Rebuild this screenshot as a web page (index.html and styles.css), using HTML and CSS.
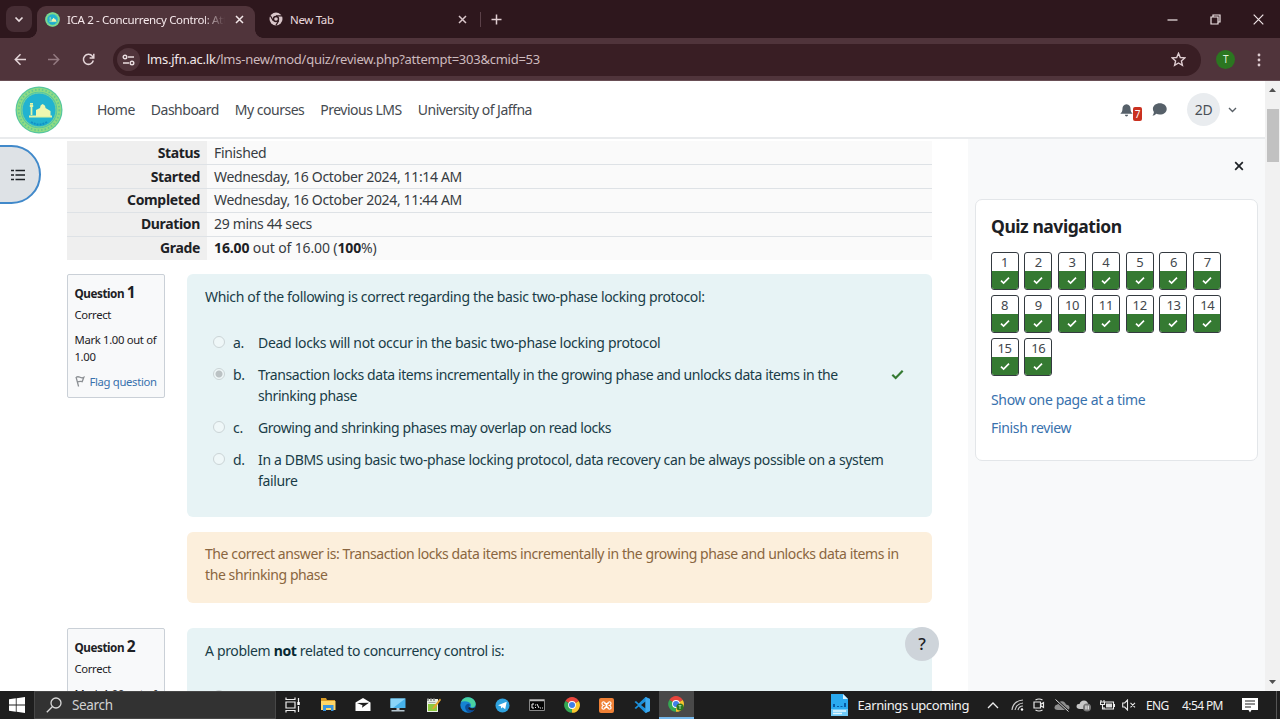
FILE: index.html
```html
<!DOCTYPE html>
<html lang="en">
<head>
<meta charset="utf-8">
<title>ICA 2 - Concurrency Control: Attempt review</title>
<link rel="stylesheet" href="styles.css">
</head>
<body>
<svg class="defs" aria-hidden="true">
  <symbol id="check" viewBox="0 0 12 10"><path d="M1.2 5.2 4.3 8.2 10.8 1.6" fill="none" stroke="currentColor" stroke-width="2"/></symbol>
  <symbol id="seal" viewBox="0 0 48 48">
    <circle cx="24" cy="24" r="23.5" fill="#55c6a0"/>
    <circle cx="24" cy="24" r="20.3" fill="none" stroke="#8fdc84" stroke-width="4"/>
    <circle cx="24" cy="24" r="17" fill="#22b3d0" stroke="#7bd49b" stroke-width="1"/>
    <circle cx="24" cy="24" r="20.3" fill="none" stroke="#62c795" stroke-width="1.8" stroke-dasharray="1.5 2"/>
    <path d="M14 30.500h23M16.500 29V20M14.800 20h3.400M15 17.800h3" stroke="#e4f5a5" stroke-width="1.800"/>
    <path d="M21 30v-6l4-2q0-3 2.500-4 3 1 3 4l5 3v5z" fill="#eff7b0"/>
    <path d="M16 36q8 5 16 0" fill="none" stroke="#128fc5" stroke-width="2" stroke-dasharray="2 1"/>
  </symbol>
  <symbol id="chrome" viewBox="0 0 16 16">
    <path d="M8 8 1.300 4A7.800 7.800 0 0 1 14.800 4z" fill="#e8453c"/>
    <path d="M8 8 14.800 4A7.800 7.800 0 0 1 8 15.800z" fill="#fbc72d"/>
    <path d="M8 8v7.800A7.800 7.800 0 0 1 1.300 4z" fill="#35a853"/>
    <circle cx="8" cy="8" r="3.900" fill="#fff"/><circle cx="8" cy="8" r="3" fill="#3f7fe8"/>
  </symbol>
</svg>

<header class="tabstrip">
  <div class="tab-search"><svg width="10" height="7" viewBox="0 0 10 7"><path d="m1.500 1.500 3.500 3.500 3.500-3.500" fill="none" stroke="#e9dcdf" stroke-width="1.700"/></svg></div>
  <div class="tab tab-active">
    <svg width="15" height="15"><use href="#seal"/></svg>
    <span class="tab-title tab-fade">ICA 2 - Concurrency Control: Att</span>
    <svg class="close" width="9" height="9" viewBox="0 0 9 9"><path d="m1 1 7 7m0-7-7 7" stroke="#f3e8ea" stroke-width="1.500"/></svg>
  </div>
  <div class="tab tab-idle">
    <svg width="14" height="14" viewBox="0 0 14 14"><circle cx="7" cy="7" r="6.500" fill="#d9c6ca"/><circle cx="7" cy="7" r="2.500" fill="#d9c6ca" stroke="#2e171d" stroke-width="1.400"/><path d="M7 3.800h6M4.200 8.600 1.400 3.700M9.700 8.700 6.900 13.400" stroke="#2e171d" stroke-width="1.200"/></svg>
    <span class="tab-title">New Tab</span>
    <svg class="close" width="9" height="9" viewBox="0 0 9 9"><path d="m1 1 7 7m0-7-7 7" stroke="#d9c6ca" stroke-width="1.500"/></svg>
  </div>
  <i class="tab-divider"></i>
  <svg class="plus" width="11" height="11" viewBox="0 0 11 11"><path d="M5.500.5v10M.5 5.500h10" stroke="#e0ced2" stroke-width="1.500"/></svg>
  <div class="window-buttons">
    <svg width="11" height="11" viewBox="0 0 11 11"><path d="M.5 6h10" stroke="#f1e6e8" stroke-width="1.200"/></svg>
    <svg width="11" height="11" viewBox="0 0 11 11"><path d="M1 3h7v7H1zM3 3V1h7v7H8" fill="none" stroke="#f1e6e8" stroke-width="1.200"/></svg>
    <svg width="11" height="11" viewBox="0 0 11 11"><path d="m.7.7 9.600 9.600m0-9.600L.7 10.300" stroke="#f1e6e8" stroke-width="1.200"/></svg>
  </div>
</header>

<div class="toolbar">
  <svg width="13" height="13" viewBox="0 0 13 13"><path d="M12 6.500H1.500M6.500 1.300 1.300 6.500l5.200 5.200" fill="none" stroke="#e5d6d9" stroke-width="1.500"/></svg>
  <svg class="forward" width="13" height="13" viewBox="0 0 13 13"><path d="M1 6.500h10.500M6.500 1.300l5.200 5.200-5.200 5.200" fill="none" stroke="#947a81" stroke-width="1.500"/></svg>
  <svg class="reload" width="13" height="13" viewBox="0 0 13 13"><path d="M11.300 7.500a5 5 0 1 1-.9-4.200L11.600 4.700M11.800.8v4.200H7.600" fill="none" stroke="#e5d6d9" stroke-width="1.500"/></svg>
  <div class="omnibox">
    <span class="site-info"><svg width="13" height="12" viewBox="0 0 13 12"><g fill="none" stroke="#eadde0" stroke-width="1.400"><circle cx="3" cy="3" r="1.800"/><path d="M6 3h6M1 9h6"/><circle cx="10" cy="9" r="1.800"/></g></svg></span>
    <span class="url"><b>lms.jfn.ac.lk</b>/lms-new/mod/quiz/review.php?attempt=303&amp;cmid=53</span>
    <svg class="star" width="15" height="15" viewBox="0 0 15 15"><path d="m7.500 1.300 1.800 4.200 4.500.4-3.400 3 1 4.500-3.900-2.400-3.900 2.400 1-4.500-3.400-3 4.500-.4z" fill="none" stroke="#dfcdd1" stroke-width="1.400"/></svg>
  </div>
  <span class="profile">T</span>
  <svg class="kebab" width="4" height="14" viewBox="0 0 4 14" fill="#dfcdd1"><circle cx="2" cy="2" r="1.400"/><circle cx="2" cy="7" r="1.400"/><circle cx="2" cy="12" r="1.400"/></svg>
</div>

<div class="viewport">
  <div class="page">
    <nav class="navbar">
      <svg class="logo" width="48" height="48"><use href="#seal"/></svg>
      <div class="links"><a>Home</a><a>Dashboard</a><a>My courses</a><a>Previous LMS</a><a>University of Jaffna</a></div>
      <div class="user-tools">
        <div class="bell"><svg width="13" height="14" viewBox="0 0 12 14" preserveAspectRatio="none"><path d="M6 0v1.300c2.500.4 3.700 2 3.700 4.200 0 2.800.8 3.900 2 5.200H.3c1.200-1.300 2-2.400 2-5.200 0-2.200 1.200-3.800 3.700-4.200zM4.500 11.700h3q-.2 1.700-1.500 1.700t-1.500-1.700z" fill="#566069"/></svg><span class="count">7</span></div>
        <svg class="chat" width="15" height="13" viewBox="0 0 15 13"><path d="M7.800.3c3.900 0 6.900 2.400 6.900 5.600s-3 5.600-6.900 5.600c-1.300 0-2.500-.3-3.500-.8C3.200 12 1.700 12.600.3 12.600c1-.9 1.500-2.300 1.600-3.700C1.200 8 .9 7 .9 5.900.9 2.700 3.900.3 7.800.3z" fill="#566069"/></svg>
        <span class="avatar">2D</span>
        <svg width="9" height="6" viewBox="0 0 9 6"><path d="m1 1 3.500 3.500L8 1" fill="none" stroke="#596067" stroke-width="1.400"/></svg>
      </div>
    </nav>
    <div class="columns">
      <main>
        <table class="summary">
          <tr><th>Status</th><td>Finished</td></tr>
          <tr><th>Started</th><td>Wednesday, 16 October 2024, 11:14 AM</td></tr>
          <tr><th>Completed</th><td>Wednesday, 16 October 2024, 11:44 AM</td></tr>
          <tr><th>Duration</th><td>29 mins 44 secs</td></tr>
          <tr><th>Grade</th><td class="grade"><b>16.00</b> out of 16.00 (<b>100</b>%)</td></tr>
        </table>
        <section class="question">
          <aside class="info">
            <h3>Question <span>1</span></h3>
            <p class="state">Correct</p>
            <p class="mark">Mark 1.00 out of<br>1.00</p>
            <p class="flag"><svg width="10" height="11" viewBox="0 0 10 11"><path d="M1 .8 3.600 10.500M1.200 1.200Q3 .2 5 1.300T8.800 1.400L7.200 5.600Q5 5 2.500 5.800" fill="none" stroke="#8c9094" stroke-width="1.300"/></svg><a>Flag question</a></p>
          </aside>
          <div class="body">
            <div class="formulation">
              <p class="qtext">Which of the following is correct regarding the basic two-phase locking protocol:</p>
              <div class="answers">
                <div class="answer"><i class="radio"></i><span>a.</span><p class="loose">Dead locks will not occur in the basic two-phase locking protocol</p></div>
                <div class="answer"><i class="radio on"></i><span>b.</span><p class="tight">Transaction locks data items incrementally in the growing phase and unlocks data items in the<br>shrinking phase</p><svg class="right" width="13" height="11"><use href="#check"/></svg></div>
                <div class="answer"><i class="radio"></i><span>c.</span><p class="tight">Growing and shrinking phases may overlap on read locks</p></div>
                <div class="answer"><i class="radio"></i><span>d.</span><p>In a DBMS using basic two-phase locking protocol, data recovery can be always possible on a system<br>failure</p></div>
              </div>
            </div>
            <div class="outcome tight">The correct answer is: Transaction locks data items incrementally in the growing phase and unlocks data items in<br>the shrinking phase</div>
          </div>
        </section>
        <section class="question">
          <aside class="info">
            <h3>Question <span>2</span></h3>
            <p class="state">Correct</p>
            <p class="mark">Mark 1.00 out of</p>
          </aside>
          <div class="body">
            <div class="formulation">
              <p class="qtext">A problem <b>not</b> related to concurrency control is:</p>
              <div class="answers"><div class="answer"><i class="radio"></i></div></div>
            </div>
          </div>
        </section>
      </main>
      <aside class="drawer">
        <svg class="drawer-close" width="10" height="10" viewBox="0 0 10 10"><path d="m1.200 1.200 7.600 7.600m0-7.600L1.200 8.800" stroke="#1d2125" stroke-width="1.700"/></svg>
        <div class="card">
          <h2>Quiz navigation</h2>
          <div class="cells">
            <a class="cell">1<i><svg><use href="#check"/></svg></i></a>
            <a class="cell">2<i><svg><use href="#check"/></svg></i></a>
            <a class="cell">3<i><svg><use href="#check"/></svg></i></a>
            <a class="cell">4<i><svg><use href="#check"/></svg></i></a>
            <a class="cell">5<i><svg><use href="#check"/></svg></i></a>
            <a class="cell">6<i><svg><use href="#check"/></svg></i></a>
            <a class="cell">7<i><svg><use href="#check"/></svg></i></a>
            <a class="cell">8<i><svg><use href="#check"/></svg></i></a>
            <a class="cell">9<i><svg><use href="#check"/></svg></i></a>
            <a class="cell">10<i><svg><use href="#check"/></svg></i></a>
            <a class="cell">11<i><svg><use href="#check"/></svg></i></a>
            <a class="cell">12<i><svg><use href="#check"/></svg></i></a>
            <a class="cell">13<i><svg><use href="#check"/></svg></i></a>
            <a class="cell">14<i><svg><use href="#check"/></svg></i></a>
            <a class="cell">15<i><svg><use href="#check"/></svg></i></a>
            <a class="cell">16<i><svg><use href="#check"/></svg></i></a>
          </div>
          <a class="card-link">Show one page at a time</a>
          <a class="card-link">Finish review</a>
        </div>
      </aside>
    </div>
    <div class="index-toggle"><svg width="15" height="12" viewBox="0 0 15 12"><path d="M0 1.500h3M0 6h3M0 10.500h3M4.500 1.500H14M4.500 6H14M4.500 10.500H14" stroke="#1d2125" stroke-width="1.700"/></svg></div>
    <div class="help">?</div>
  </div>
  <div class="scrollbar">
    <svg width="7" height="4" viewBox="0 0 7 4"><path d="M3.500 0 7 4H0z" fill="#505050"/></svg>
    <i class="thumb"></i>
    <svg class="down" width="7" height="4" viewBox="0 0 7 4"><path d="M0 0h7L3.500 4z" fill="#505050"/></svg>
  </div>
</div>

<footer class="taskbar">
  <div class="start"><svg width="16" height="16" viewBox="0 0 16 16" fill="#fff"><path d="M0 2.300 6.800 1.300v6.300H0zM7.600 1.200 16 0v7.600H7.600zM0 8.400h6.800v6.300L0 13.700zM7.600 8.400H16V16l-8.400-1.200z"/></svg></div>
  <div class="search"><svg width="16" height="16" viewBox="0 0 16 16"><circle cx="10" cy="6" r="5" fill="none" stroke="#d8d8d8" stroke-width="1.300"/><path d="M6.300 9.700.8 15.200" stroke="#d8d8d8" stroke-width="1.300"/></svg><span>Search</span></div>
  <div class="apps">
    <div><svg width="16" height="16" viewBox="0 0 16 16"><path d="M1 .5v2h9v-2M1 15.500v-2h9v2M1 5h9v6H1zM13.500 1v4M13.500 9v6" fill="none" stroke="#eee" stroke-width="1.200"/><path d="M12.300 5h2.500v3h-2.500z" fill="#fff"/></svg></div>
    <div><svg width="16" height="16" viewBox="0 0 16 16"><path d="M1 1h5l1 2h8v10H1z" fill="#d99b25"/><path d="M1 4h14.500v9H1z" fill="#ffd666"/><path d="M3 8h10.500v6H11v-3H6v3H3z" fill="#3a96dd"/></svg></div>
    <div><svg width="16" height="16" viewBox="0 0 16 16"><path d="M.5 5.500 8 1l7.500 4.500V14H.5z" fill="#fff"/><path d="m2 6 12-.3-7 5 .5-2.500z" fill="#1e1e1e"/></svg></div>
    <div><svg width="16" height="16" viewBox="0 0 16 16"><path d="M.5 1.500h15v9.500H.5z" fill="#47b2eb"/><path d="M.5 1.500h15L3 11H.5z" fill="#8bd5f8"/><path d="M6.500 11h3v2h5v1.500h-13V13h5z" fill="#b5c6cf"/></svg></div>
    <div><svg width="16" height="16" viewBox="0 0 16 16"><path d="M2 2h11v13H2z" fill="#e9efe4"/><path d="M3 7h9v7H3z" fill="#8fc93f"/><path d="M3 1v3M6 1v3M9 1v3" stroke="#777" stroke-width="1.300"/><path d="M3.500 5.500h7" stroke="#aaa"/><path d="m15 1.500-7 8.500-1 2.500 3-1.500 6-8z" fill="#e5a52e"/></svg></div>
    <div><svg width="16" height="16" viewBox="0 0 16 16"><circle cx="8" cy="8" r="7.700" fill="#1683d2"/><path d="M1 5Q3 .3 8 .3c5 0 8 4 7.700 7.200-.4 3-4 3.500-5.200 2.500Q12 7 9 5.300 5 3.500 1 5z" fill="#49d2a1"/><path d="M10 8Q9 6 6.500 7.500c-3 2.500-.5 7 2.500 8q4 0 5.700-3-4.700 1.500-6-2Z" fill="#0b4f9d"/><path d="M9.500 10Q12 12.500 15.500 10q-.5 2-2 3.200Q9 14 8 11z" fill="#1e1e1e"/></svg></div>
    <div><svg width="15" height="15" viewBox="0 0 15 15"><circle cx="7.500" cy="7.500" r="7" fill="#2fa3df"/><path d="m3 7.300 8.700-3.500-1.500 7.500-2.600-2-1.500 1.300-.2-2.300z" fill="#fff"/></svg></div>
    <div><svg width="16" height="12" viewBox="0 0 16 12"><path d="M.5.5h15v11H.5z" fill="#050505" stroke="#888"/><path d="M1 1.500h14" stroke="#bbb" stroke-width="1.500"/><path d="M5 5H3v4h2M6.500 5.500v1M6.500 8v1M8 5l2 4M11 9h1M13 9h1" fill="none" stroke="#eee"/></svg></div>
    <div><svg width="16" height="16"><use href="#chrome"/></svg></div>
    <div><svg width="15" height="15" viewBox="0 0 15 15"><rect width="15" height="15" rx="2" fill="#f08136"/><path d="M5.300 5.500h4.400M5.300 9.500h4.400M5.200 4Q3 3.500 3 5.500q0 1.500 1.500 2Q3 8 3 9.500 3 11.500 5.200 11 6.500 10.500 7.500 7.500 8.500 4.500 9.800 4 12 3.500 12 5.500q0 1.500-1.500 2Q12 8 12 9.500q0 2-2.200 1.500Q8.500 10.500 7.500 7.500 6.500 4.500 5.200 4z" fill="none" stroke="#fff" stroke-width="1.200"/></svg></div>
    <div><svg width="16" height="16" viewBox="0 0 16 16"><path d="M11.500 0 16 2v12l-4.500 2L4.700 9.600 2 12 .5 11 4 8 .5 5 2 4l2.700 2.400zM11.500 4.500 7 8l4.500 3.500z" fill="#1c91dc"/><path d="M11.500 0 16 2v12l-4.500 2z" fill="#3fa9ed"/></svg></div>
    <div class="running"><svg width="17" height="16" viewBox="0 0 17 16"><use href="#chrome" width="16" height="16"/><circle cx="12" cy="11" r="3.600" fill="#2b7620"/><path d="M12 9.500v3.500M10.600 9.600h2.800" stroke="#a6dc97"/></svg></div>
  </div>
  <div class="news"><svg width="17" height="22" viewBox="0 0 17 22"><path d="M0 0h12l5 5v17H0z" fill="#2aaaf0"/><path d="M12 0v5h5z" fill="#d3f0ff"/><path d="M2 13v-3h2v3M6 13v-1h2v1M9.500 13v-1h2v1M13 13V9h2v4" fill="#075ba5"/><path d="M0 15h17v7H0z" fill="#71cbf8"/><path d="M2 17h13M2 19.500h9" stroke="#e4f7ff" stroke-width="1.300"/></svg><span>Earnings upcoming</span></div>
  <div class="tray">
    <svg width="12" height="7" viewBox="0 0 12 7"><path d="m1 6 5-5 5 5" fill="none" stroke="#eee" stroke-width="1.300"/></svg>
    <svg class="wifi" width="13" height="12" viewBox="0 0 13 12"><path d="M1 11Q2 2 12 1M4 11q1-6 8-7M7 11q1-4 5-4" fill="none" stroke="#c9c9c9" stroke-width="1.200"/><circle cx="11" cy="10.500" r="1.200" fill="#fff"/></svg>
    <svg class="meet" width="12" height="14" viewBox="0 0 12 14"><path d="M1 4h6.500v6H1zM7.500 6.500 10.500 4.500v5l-3-2M2.500 2Q6 0 9.500 2M2.500 12q3.500 2 7 0" fill="none" stroke="#e8e8e8" stroke-width="1.200"/></svg>
    <svg class="cloud" width="16" height="13" viewBox="0 0 16 13"><path d="M4 11q-4 0-3.500-3 .5-2.500 3-2.500Q5 2 8 2.200q3 .2 4 3.300 3.500.5 3.500 3T13 11z" fill="#8f8f8f"/><path d="m1.500.5 13 12" stroke="#1e1e1e" stroke-width="2.500"/><path d="m1.500.5 13 12" stroke="#ddd"/></svg>
    <svg class="sync" width="16" height="13" viewBox="0 0 16 13"><path d="M4 10Q.5 10 .5 7.300T3.500 5q1-3.500 4.500-3.500T12 5q2.500.5 2.500 3T12 10z" fill="#c7c7c7"/><circle cx="11" cy="8.500" r="4" fill="#777"/><path d="M10 6.500v4M12.200 6.500v4" stroke="#fff" stroke-width="1.100"/></svg>
    <svg class="battery" width="15" height="12" viewBox="0 0 15 12"><path d="M5 3h8.500v7H4V8M14.500 5v3M1 1v2M4 1v2M.5 3h4v2.500h-4zM2.500 5.500V10H5" fill="none" stroke="#eee" stroke-width="1.100"/><path d="M6 4.500h6v4H6z" fill="#ddd"/></svg>
    <svg class="mute" width="14" height="12" viewBox="0 0 14 12"><path d="M.7 4h2L5.500 1v10L2.700 8h-2zM8.500 3.800l4.500 4.500m0-4.500L8.500 8.300" fill="none" stroke="#e8e8e8" stroke-width="1.100"/></svg>
    <span class="lang">ENG</span>
    <span class="clock">4:54 PM</span>
    <svg class="notice" width="16" height="15" viewBox="0 0 16 15"><path d="M0 0h16v12H9.500L8 14.500 6.500 12H0z" fill="#fff"/><path d="M3 3h10M3 6h10M3 9h6" stroke="#222" stroke-width="1.200"/></svg>
    <i class="show-desktop"></i>
  </div>
</footer>
</body>
</html>
```
FILE: styles.css
```css
* { box-sizing: border-box; }
html, body { height: 100%; }
body {
  margin: 0;
  display: flex;
  flex-direction: column;
  overflow: hidden;
  font: 14px/21px "Noto Sans", "Open Sans", sans-serif;
  letter-spacing: -0.34px;
  color: #1d2125;
  background: #fff;
}
h2, h3, p { margin: 0; }
svg { display: block; flex: none; }
.defs { position: absolute; width: 0; height: 0; }
.tight { letter-spacing: -0.41px; }
.loose { letter-spacing: -0.31px; }

/* Browser window */
.tabstrip {
  flex: none;
  height: 38px;
  display: flex;
  align-items: center;
  padding-left: 6px;
  background: #2e171d;
  color: #ead9dd;
  font-size: 11.500px;
}
.tab-search {
  width: 26px; height: 26px;
  border-radius: 8px;
  background: #462d34;
  display: flex; align-items: center; justify-content: center;
}
.tab { display: flex; align-items: center; height: 32px; }
.tab-active {
  position: relative;
  align-self: flex-end;
  width: 218px;
  margin-left: 5px;
  padding: 0 11px 6px 8px;
  border-radius: 9px 9px 0 0;
  background: #50343b;
  color: #f6e9ec;
}
.tab-active::before, .tab-active::after {
  content: "";
  position: absolute;
  bottom: 0;
  width: 8px; height: 8px;
}
.tab-active::before { left: -8px; background: radial-gradient(circle at 0 0, transparent 7.500px, #50343b 8px); }
.tab-active::after { right: -8px; background: radial-gradient(circle at 100% 0, transparent 7.500px, #50343b 8px); }
.tab-title { margin-left: 7px; white-space: nowrap; }
.tab-fade { width: 158px; overflow: hidden; -webkit-mask-image: linear-gradient(90deg, #000 136px, transparent 158px); mask-image: linear-gradient(90deg, #000 136px, transparent 158px); }
.tab .close { margin-left: auto; }
.tab-idle { width: 212px; padding: 0 0 0 14px; }
.tab-divider { width: 1px; height: 15px; margin-left: 13px; background: #5b4149; }
.plus { margin-left: 10px; }
.window-buttons { margin-left: auto; display: flex; gap: 32px; padding-right: 16px; }

.toolbar {
  flex: none;
  height: 43px;
  display: flex;
  align-items: center;
  padding: 0 19px 0 14px;
  background: #50343b;
  box-shadow: inset 0 -1px #694e55;
}
.forward { margin-left: 20px; }
.reload { margin-left: 22px; }
.omnibox {
  flex: 1;
  height: 32px;
  margin-left: 18px;
  display: flex;
  align-items: center;
  padding: 0 15px 0 4px;
  border-radius: 16px;
  background: #391e24;
}
.site-info { width: 23px; height: 23px; border-radius: 50%; background: #50343b; display: flex; align-items: center; justify-content: center; }
.url { margin-left: 7px; font-size: 13px; letter-spacing: -0.250px; color: #cdbabe; }
.url b { font-weight: 400; color: #f3e8ea; }
.star { margin-left: auto; }
.profile { width: 19px; height: 19px; margin-left: 15px; border-radius: 50%; background: #2b7620; color: #e0f0dc; font-size: 10px; line-height: 19px; text-align: center; }
.kebab { margin-left: 22px; }

/* Page */
.viewport { flex: 1; min-height: 0; display: flex; }
.page { position: relative; flex: 1; min-width: 0; display: flex; flex-direction: column; overflow: hidden; }
.navbar {
  flex: none;
  height: 58px;
  display: flex;
  align-items: center;
  padding: 1px 28px 0 15px;
  border-bottom: 2px solid #e9ebed;
}
.links { display: flex; gap: 16px; margin-left: 34px; color: #454a50; letter-spacing: -0.500px; }
.user-tools { margin-left: auto; display: flex; align-items: center; }
.bell { position: relative; }
.count { position: absolute; left: 13px; top: 4px; width: 9px; height: 14px; border-radius: 2px; background: #ca3120; color: #fff; font-size: 10px; line-height: 14px; text-align: center; letter-spacing: 0; }
.chat { margin-left: 19px; }
.avatar { width: 33px; height: 33px; margin: 0 8px 0 20px; border-radius: 50%; background: #e9ecef; color: #495057; line-height: 33px; text-align: center; }

.columns { flex: 1; min-height: 0; display: flex; }
main { width: 968px; padding: 2px 36px 0 67px; overflow: hidden; }

.summary { width: 865px; border-collapse: collapse; margin-bottom: 14px; }
.summary th, .summary td { padding: 1px 7px; height: 23.800px; border-bottom: 1px solid #dee2e6; line-height: 20px; }
.summary th { width: 140px; text-align: right; background: #efefef; }
.summary td { background: #fafafa; color: #373c42; }
.summary .grade { letter-spacing: -0.130px; }
.summary .grade b { color: #1d2125; }
.summary tr:last-child > * { border-bottom: 0; }

.question { display: flex; align-items: flex-start; gap: 22px; margin-bottom: 25px; }
.info {
  flex: none;
  width: 98px;
  height: 124px;
  padding: 8px 6.500px;
  border: 1px solid #cad0d7;
  border-radius: 2px;
  background: #f8f9fa;
  font-size: 11.300px;
  line-height: 17px;
  white-space: nowrap;
}
.info h3 { font-size: 11.700px; line-height: 18px; letter-spacing: -0.450px; }
.info h3 span { font-size: 15.500px; }
.state { margin-top: 4px; }
.mark { margin-top: 8px; }
.flag { display: flex; align-items: center; gap: 5px; margin-top: 8px; }
.info a, .card-link { color: #3871ad; }
.body { flex: 1; }
.formulation { height: 243px; padding: 12px 18px; border-radius: 6px; background: #e7f3f5; color: #193c47; white-space: nowrap; }
.formulation b { color: #062832; }
.answers { display: flex; flex-direction: column; gap: 11px; margin-top: 25px; padding-left: 8px; }
.answer { display: flex; align-items: flex-start; }
.answer span { width: 25px; margin-left: 8px; }
.answer p { line-height: 21px; }
.radio { flex: none; width: 12px; height: 12px; margin-top: 4px; border: 1px solid #cbd4d6; border-radius: 50%; background: #eff7f8; }
.radio.on { background: radial-gradient(circle, #bbc2c4 3px, #eff7f8 4px); }
.right { margin: 5px 10px 0 auto; color: #357a32; }
.outcome { height: 71px; margin-top: 15px; padding: 11px 18px; border-radius: 6px; background: #fcefdc; color: #8a6640; white-space: nowrap; }

.drawer { flex: 1; padding: 22px 7px 0; background: #f8f9fa; }
.drawer-close { margin: 0 14px 0 auto; }
.card { height: 262px; margin-top: 28px; padding: 15px 15px 0 14.500px; border: 1px solid #e3e6e9; border-radius: 7px; background: #fff; }
.card h2 { padding-left: 0.500px; font-size: 17.500px; line-height: 22px; letter-spacing: -0.450px; }
.cells { display: grid; grid-template-columns: repeat(7, 28px); gap: 5px 5.800px; margin: 15px 0 13px; }
.cell { height: 38px; display: flex; flex-direction: column; border: 1px solid #343a40; border-radius: 3px; overflow: hidden; color: #42474c; font-size: 13px; line-height: 18px; text-align: center; }
.cell i { flex: 1; display: flex; align-items: center; justify-content: center; background: #357a32; color: #fff; }
.cell svg { width: 10px; height: 9px; }
.card-link { display: block; margin-bottom: 7px; padding-left: 0.500px; }

.index-toggle { position: absolute; left: -8px; top: 64px; width: 49px; height: 59px; padding: 22px 0 0 18px; border: 2px solid #4189ca; border-radius: 0 30px 30px 0; background: #dee2e6; }
.index-toggle svg { margin-left: -1.500px; }
.help { position: absolute; left: 905px; top: 546px; width: 34px; height: 34px; border-radius: 50%; background: #ced4da; text-align: center; line-height: 34px; font-size: 17px; font-weight: 500; }

.scrollbar { flex: none; width: 15px; display: flex; flex-direction: column; align-items: center; padding: 7px 0; background: #f1f1f1; }
.thumb { width: 12px; height: 53px; margin-top: 17px; background: #c1c1c1; }
.down { margin-top: auto; }

/* Taskbar */
.taskbar { flex: none; height: 28px; display: flex; align-items: center; background: #1e1e1e; color: #f2f2f2; }
.start { width: 34px; padding-left: 9px; }
.search { width: 242px; height: 28px; display: flex; align-items: center; gap: 10px; padding-left: 11px; border: 1px solid #474747; background: #323232; color: #d2d2d2; font-size: 13.500px; }
.apps { display: flex; }
.apps > div { width: 34.830px; height: 28px; display: flex; align-items: center; justify-content: center; }
.apps .running { background: #494949; border-bottom: 2px solid #76b9ed; }
.news { display: flex; align-items: center; gap: 10px; margin-left: auto; font-size: 13px; letter-spacing: -0.420px; white-space: nowrap; }
.tray { display: flex; align-items: center; width: 311px; padding: 0 0 0 18px; font-size: 12px; letter-spacing: -0.600px; white-space: nowrap; }
.wifi { margin-left: 12px; }
.meet { margin-left: 9px; }
.cloud { margin-left: 9px; }
.sync { margin-left: 6px; }
.battery { margin-left: 8px; }
.mute { margin-left: 7px; }
.lang { width: 23px; margin-left: 10px; }
.clock { width: 40px; margin-left: 13px; }
.notice { margin-left: 20px; }
.show-desktop { width: 1px; height: 28px; margin-left: auto; margin-right: 3px; background: #555; }
```
